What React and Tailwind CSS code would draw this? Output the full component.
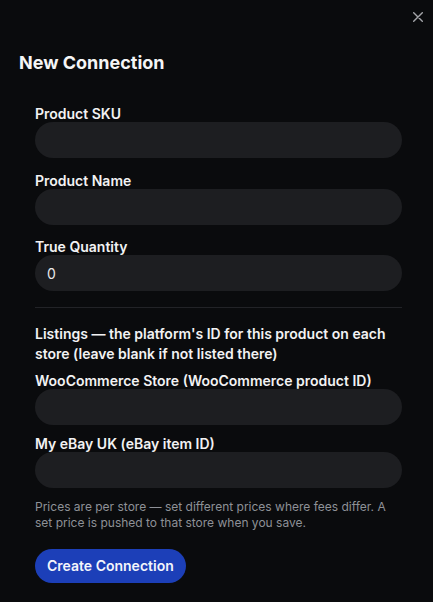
import { useState } from 'react';

function Field({ label, value = '', onChange }) {
  return (
    <label className="flex flex-col">
      <span className="text-[14px] leading-4 font-semibold text-[#f2f2f3]">{label}</span>
      <input
        type="text"
        value={value}
        onChange={(e) => onChange(e.target.value)}
        className="h-9 w-full rounded-full bg-[#1d1e21] px-3 text-[14px] text-[#e8e8ea] outline-none"
      />
    </label>
  );
}

export default function App() {
  const [form, setForm] = useState({ sku: '', name: '', qty: '0', woo: '', ebay: '' });
  const set = (k) => (v) => setForm((f) => ({ ...f, [k]: v }));

  return (
    <div
      className="relative min-h-[602px] w-full bg-[#0a0b0d] pl-[19px] pt-[49px] text-white"
      style={{ fontFamily: 'Inter, "Noto Sans", sans-serif' }}
    >
      <button type="button" aria-label="Close" className="absolute right-[10px] top-[12px] text-[#a3a4a8]">
        <svg width="10" height="10" viewBox="0 0 10 10" fill="none" stroke="currentColor" strokeWidth="1.4" strokeLinecap="round">
          <path d="M0.7 0.7 9.3 9.3M9.3 0.7 0.7 9.3" />
        </svg>
      </button>

      <h2 className="text-[18px] leading-7 font-bold text-[#f5f5f6]">New Connection</h2>

      <div className="mt-[29px] ml-4 mr-[31px] flex flex-col">
        <div className="flex flex-col gap-[14.5px]">
          <Field label="Product SKU" value={form.sku} onChange={set('sku')} />
          <Field label="Product Name" value={form.name} onChange={set('name')} />
          <Field label="True Quantity" value={form.qty} onChange={set('qty')} />
        </div>

        <div className="my-4 h-px bg-[#222327]" />

        <p className="text-[14px] leading-5 font-semibold text-[#f2f2f3]">
          Listings — the platform's ID for this product on each store (leave blank if not listed there)
        </p>

        <div className="mt-[9px] flex flex-col gap-[10.5px]">
          <Field label="WooCommerce Store (WooCommerce product ID)" value={form.woo} onChange={set('woo')} />
          <Field label="My eBay UK (eBay item ID)" value={form.ebay} onChange={set('ebay')} />
        </div>

        <p className="mt-[11px] text-[12px] leading-4 text-[#8e9197]">
          Prices are per store — set different prices where fees differ. A set price is pushed to that store when you save.
        </p>

        <div className="mt-[18px]">
          <button
            type="button"
            className="h-[34px] rounded-full bg-[#1c3fb8] px-3 text-[14px] font-semibold text-[#f3f5fb]"
          >
            Create Connection
          </button>
        </div>
      </div>
    </div>
  );
}
